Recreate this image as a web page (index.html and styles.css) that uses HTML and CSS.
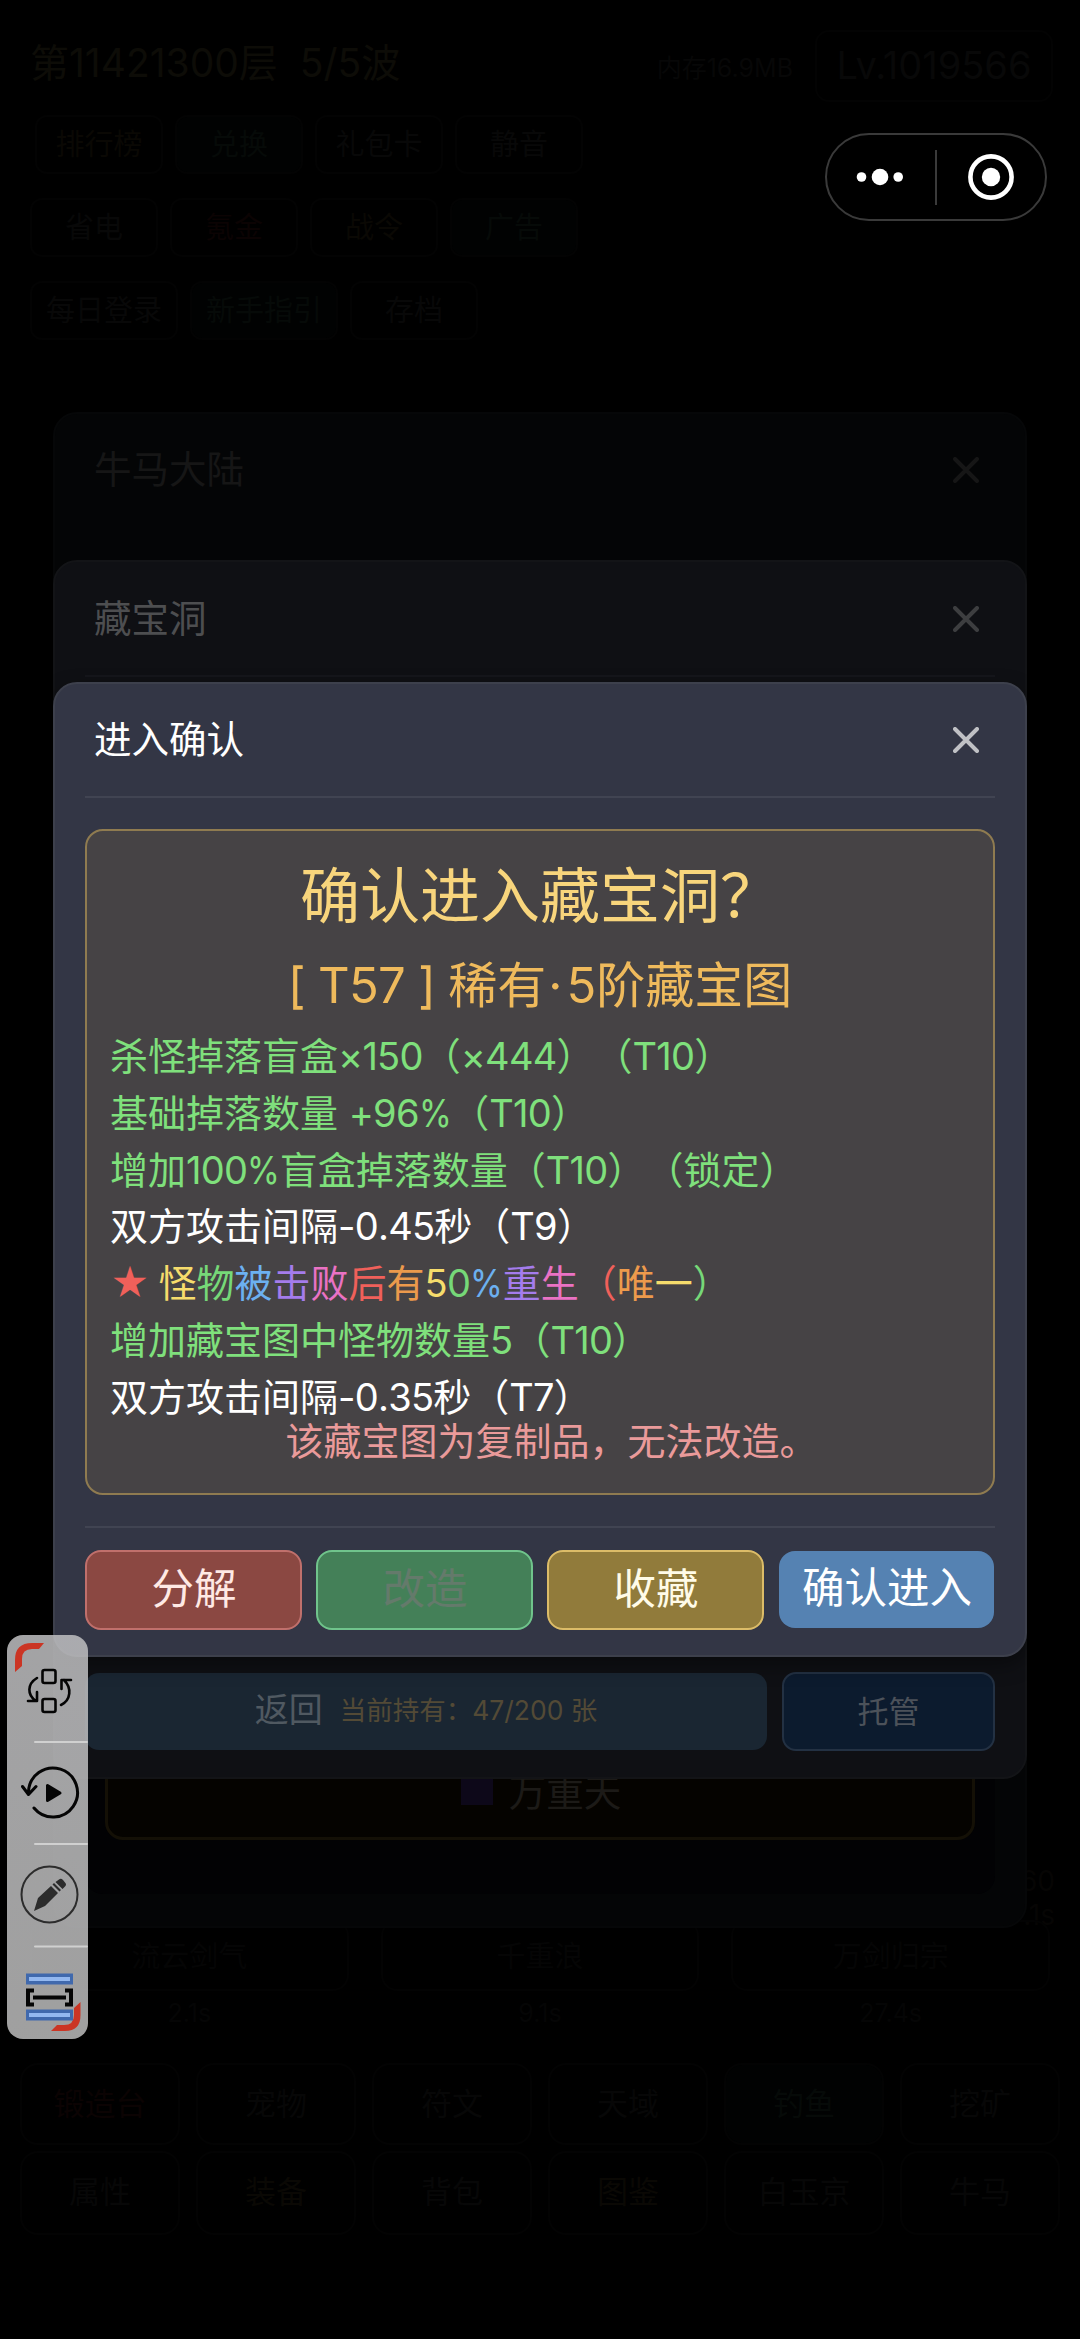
FILE: index.html
```html
<!DOCTYPE html>
<html lang="zh-CN">
<head>
<meta charset="utf-8">
<title>进入确认</title>
<link rel="stylesheet" href="styles.css">
</head>
<body>
<div class="screen">
  <div class="game">
    <header class="topbar">
      <span class="stage">第11421300层&nbsp; 5/5波</span>
      <span class="memory">内存16.9MB</span>
      <span class="level">Lv.1019566</span>
    </header>
    <nav class="chips">
      <div class="chip-row first"><span class="chip gold">排行榜</span><span class="chip green">兑换</span><span class="chip">礼包卡</span><span class="chip">静音</span></div>
      <div class="chip-row second"><span class="chip">省电</span><span class="chip red">氪金</span><span class="chip gold">战令</span><span class="chip green">广告</span></div>
      <div class="chip-row third"><span class="chip wide">每日登录</span><span class="chip wide green">新手指引</span><span class="chip">存档</span></div>
    </nav>
    <div class="counters"><span>60</span><span>.1s</span></div>
    <section class="skills">
      <div class="skill"><b>流云剑气</b><i>2.1s</i></div>
      <div class="skill"><b>千重浪</b><i>9.1s</i></div>
      <div class="skill"><b>万剑归宗</b><i>27.4s</i></div>
    </section>
    <nav class="menu">
      <span class="red">锻造台</span><span>宠物</span><span>符文</span><span>天域</span><span class="green">钓鱼</span><span>挖矿</span>
      <span>属性</span><span class="gold">装备</span><span>背包</span><span class="gold">图鉴</span><span>白玉京</span><span>牛马</span>
    </nav>
  </div>

  <section class="modal modal-land">
    <header class="modal-head"><h2>牛马大陆</h2><svg class="close" viewBox="0 0 26 26"><path d="M2 2 24 24M24 2 2 24"/></svg></header>
    <div class="land-body">
      <div class="land-button"><svg class="gem" viewBox="0 0 36 36"><path d="M2 2h32v32H2z"/></svg>万重天</div>
    </div>
  </section>

  <section class="modal modal-cave">
    <header class="modal-head"><h2>藏宝洞</h2><svg class="close" viewBox="0 0 26 26"><path d="M2 2 24 24M24 2 2 24"/></svg></header>
    <footer class="cave-actions">
      <button class="back">返回<small>当前持有：47/200 张</small></button>
      <button class="host">托管</button>
    </footer>
  </section>

  <section class="modal modal-confirm">
    <header class="modal-head"><h2>进入确认</h2><svg class="close" viewBox="0 0 26 26"><path d="M2 2 24 24M24 2 2 24"/></svg></header>
    <div class="card">
      <h1>确认进入藏宝洞？</h1>
      <h3><span class="tier">[ T57 ] </span>稀有<span class="dot">·</span>5阶藏宝图</h3>
      <ul class="affixes">
        <li class="good">杀怪掉落盲盒<em>×150</em>（<em>×444</em>）（<em>T10</em>）</li>
        <li class="good">基础掉落数量 <em>+96<s>%</s></em>（<em>T10</em>）</li>
        <li class="good">增加<em>100<s>%</s></em>盲盒掉落数量（<em>T10</em>）（锁定）</li>
        <li>双方攻击间隔<em>-0.45</em>秒（<em>T9</em>）</li>
        <li class="rainbow"><span class="c1 star">★</span> <span class="c3">怪</span><span class="c4">物</span><span class="c5">被</span><span class="c6">击</span><span class="c7">败</span><span class="c1">后</span><span class="c2">有</span><em><span class="c3">5</span><span class="c4">0</span><s class="c5">%</s></em><span class="c6">重</span><span class="c7">生</span><span class="c1">（</span><span class="c2">唯</span><span class="c3">一</span><span class="c4">）</span></li>
        <li class="good">增加藏宝图中怪物数量<em>5</em>（<em>T10</em>）</li>
        <li>双方攻击间隔<em>-0.35</em>秒（<em>T7</em>）</li>
      </ul>
      <p class="note">该藏宝图为复制品，无法改造。</p>
    </div>
    <footer class="actions">
      <button class="b-red">分解</button>
      <button class="b-green">改造</button>
      <button class="b-gold">收藏</button>
      <button class="b-blue">确认进入</button>
    </footer>
  </section>

  <div class="capsule">
    <svg class="dots" viewBox="0 0 48 18"><circle cx="5.5" cy="9" r="4.8"/><circle cx="24" cy="9" r="8.3"/><circle cx="42.2" cy="9" r="4.8"/></svg>
    <span class="bar"></span>
    <svg class="target" viewBox="0 0 46 46"><circle class="ring" cx="23" cy="23" r="20.6"/><circle cx="23" cy="23" r="9.2"/></svg>
  </div>

  <aside class="tools">
    <svg viewBox="0 0 82 404">
      <path class="accent" d="M8 37V25Q8 8 25 8H37L32 14H25Q15 14 15 24V31Z"/>
      <path class="accent" d="M73.500 367V380Q73.500 396 58 396H44L50 390H57Q67 390 67 380V373Z"/>
      <g class="swap">
        <rect x="35.500" y="35" width="13" height="13" rx="2"/><rect x="35.500" y="64" width="13" height="13" rx="2"/>
        <path d="M30 43C20 49 20 60 29 66M21 66H30V57M54 70C64 65 65 53 57 45M64 45H54.500V54"/>
      </g>
      <g class="replay">
        <path d="M27 173A24.500 24.500 0 1 0 21.500 157M15.500 151.500 21.500 159.500 29 151.500"/>
        <path class="fill" d="M40.500 150.500V165.500L53 158Z"/>
      </g>
      <g class="edit">
        <circle cx="42.500" cy="259.500" r="28"/>
        <path class="fill" d="M27 276 31 263 44 251 51 258 38 271ZM45.500 249.500 47 248 54 255 52.500 256.500ZM48.500 247 52 244.500Q54 243 56 245L58 247.500Q60 249.500 58 251.500L55.500 254Z"/>
      </g>
      <path class="rule" d="M28 107H80M28 209H80M28 311.500H80"/>
      <g class="scan">
        <path class="outer" d="M19 338.500H66V349.500H19ZM19 374.500H66V385.500H19Z"/>
        <path class="inner" d="M22 344H63M22 380H63"/>
        <path class="bracket" d="M27 355.500H21V369.500H27M58 355.500H64V369.500H58M26 362.500H59"/>
      </g>
    </svg>
  </aside>
</div>
</body>
</html>
```
FILE: styles.css
```css
* { box-sizing: border-box; margin: 0; padding: 0; }

body {
  background: #000;
  font-family: "Inter", "Noto Sans CJK SC", sans-serif;
  font-size: 38px;
  color: #fff;
  text-spacing-trim: space-all;
}

button { font: inherit; border: 0; padding: 0; }
h1, h2, h3, b, i { font-weight: 400; font-style: normal; }

.screen { position: relative; width: 1080px; height: 2339px; overflow: hidden; background: #000; }

/* dimmed game screen */
.game { height: 100%; color: #080808; padding-top: 29px; font-size: 29px; }
.topbar { display: flex; align-items: center; height: 73px; padding: 0 27px 0 30px; }
.stage { font-size: 39px; line-height: 66px; padding-bottom: 6px; color: #0d0c07; flex: 1; white-space: nowrap; }
.memory { font-size: 25px; color: #070707; margin-right: 22px; }
.level { width: 238px; height: 72px; line-height: 66px; text-align: center; font-size: 38px; border: 2px solid #030303; border-radius: 14px; }
.chips { display: flex; flex-direction: column; gap: 24px; padding: 13px 30px 0; height: 240px; }
.chip-row { display: flex; gap: 12px; }
.chip-row.first { padding-left: 5px; }
.chip { width: 128px; height: 59px; border: 2px solid #030303; border-radius: 12px; text-align: center; line-height: 55px; font-size: 29px; }
.chip.wide { width: 148px; }
.game .gold { color: #0a0804; }
.game .red { color: #0b0303; }
.game .green { color: #060a08; background: #010202; }
.counters { display: flex; flex-direction: column; height: 68px; margin-top: 1522px; padding-right: 25px; text-align: right; font-size: 28px; line-height: 34px; color: #060504; }
.skills { display: grid; grid-template-columns: repeat(3, 1fr); gap: 32px; padding: 0 30px; margin-top: -12px; height: 143px; color: #050505; }
.skill { display: flex; flex-direction: column; align-items: center; font-size: 25px; }
.skill b { width: 100%; height: 71px; line-height: 69px; text-align: center; font-size: 29px; border: 2px solid #030303; border-radius: 16px; }
.skill i { line-height: 44px; }
.menu { display: grid; grid-template-columns: repeat(6, 160px); gap: 6px 16px; justify-content: center; color: #070707; }
.menu span { height: 82px; line-height: 78px; text-align: center; font-size: 31px; border: 2px solid #030303; border-radius: 18px; }
.menu span:nth-child(n+7) { height: 84px; }

/* stacked dialogs */
.modal { position: absolute; left: 53px; width: 974px; border-radius: 24px; border: 2px solid; padding: 0 30px; display: flex; flex-direction: column; }
.modal-head { flex: none; height: 114px; display: flex; align-items: center; justify-content: space-between; padding: 0 16px 0 9px; border-bottom: 2px solid; border-color: inherit; }
.modal-head h2 { font-size: 37.500px; line-height: 56px; }
.close { width: 26px; height: 26px; fill: none; stroke: currentColor; stroke-width: 4; stroke-linecap: round; }

.modal-land { top: 412px; height: 1516px; background: #040506; border-color: #060708; color: #161616; }
.modal-land .modal-head { border-color: transparent; }
.land-body { flex: 1; margin: 40px 0 32px; border-radius: 18px; background: #020204; padding: 0 20px 54px; display: flex; flex-direction: column; justify-content: flex-end; }
.land-button { height: 92px; border: 3px solid #141006; border-radius: 18px; background: #050300; display: flex; align-items: center; justify-content: center; gap: 14px; padding-bottom: 10px; font-size: 37.500px; color: #1c1a17; }
.gem { width: 36px; height: 36px; fill: #0d0819; }

.modal-cave { top: 560px; height: 1219px; background: #0f1014; border-color: #131417; color: #4d4e50; }
.modal-cave .modal-head { height: 115px; border-color: #15161b; }
.modal-cave .close { color: #3d3e40; }
.cave-actions { margin: auto 0 26px; display: flex; align-items: center; gap: 15px; }
.back { flex: 1; height: 77px; border-radius: 14px; background: #1a2632; color: #505961; font-size: 34px; line-height: 50px; padding-bottom: 4px; display: flex; align-items: center; justify-content: center; gap: 17px; }
.back small { font-size: 26.500px; color: #534a36; }
.host { width: 213px; height: 79px; border: 2px solid #233143; border-radius: 14px; background: #0c1b2e; color: #4c525a; font-size: 31px; padding-bottom: 4px; }

.modal-confirm { top: 682px; height: 975px; background: #333645; border-color: #3d404c; box-shadow: 0 8px 20px rgba(0, 0, 0, .4); }
.modal-confirm .modal-head { border-color: #414452; }
.modal-confirm .close { color: #c0c1c5; }
.card { margin-top: 31px; height: 666px; border: 2px solid #8f7b50; border-radius: 18px; background: #464345; padding: 20px 23px 0; }
.card h1 { font-size: 60px; line-height: 90px; text-align: center; color: #f8d57c; }
.card h3 { font-size: 49px; line-height: 74px; margin-top: 8px; text-align: center; color: #efba5c; white-space: pre; }
.tier { letter-spacing: -.7px; }
.dot { margin: 0 4px 0 2px; }
.affixes { list-style: none; margin-top: 5px; font-size: 38px; line-height: 56.800px; font-kerning: none; }
.affixes li { height: 56.800px; white-space: pre; }
.affixes em { font-style: normal; letter-spacing: -.75px; }
.affixes s { text-decoration: none; display: inline-block; transform: scaleX(.88); transform-origin: left; margin-right: -4px; }
.star { letter-spacing: -2px; }
.good { color: #7fe07c; }
.note { line-height: 40px; margin-top: -5px; padding-left: 23px; text-align: center; color: #ea9a9a; }
.c1 { color: #f0605a; }
.c2 { color: #ec9a4c; }
.c3 { color: #f6dc6c; }
.c4 { color: #76d878; }
.c5 { color: #6cb0f0; }
.c6 { color: #a47cec; }
.c7 { color: #ea72c4; }

.actions { margin-top: 31px; padding-top: 22px; border-top: 2px solid #414452; display: grid; grid-template-columns: repeat(4, 1fr); gap: 14px; }
.actions button { height: 80px; border: 2px solid; border-radius: 16px; font-size: 42.500px; line-height: 70px; padding: 0 0 3px 1px; color: #fff; }
.actions .b-red { background: #8b4842; border-color: #c0706c; color: #ffe9e4; }
.actions .b-green { background: #448058; border-color: #70c48c; color: #647a6b; }
.actions .b-gold { background: #917b3b; border-color: #dcbc68; color: #fffbe8; }
.actions .b-blue { background: #5582b2; border: 0; height: 77px; margin: 1px 1px 0; }

/* mini-program capsule */
.capsule { position: absolute; left: 825px; top: 133px; width: 222px; height: 88px; border: 2px solid #3a3a3a; border-radius: 44px; background: #000; display: flex; align-items: center; padding-left: 29px; }
.capsule svg { fill: #fff; }
.dots { width: 48px; height: 18px; }
.bar { width: 2px; height: 55px; background: #3a3a3a; margin: 0 31px 0 31px; }
.target { width: 46px; height: 46px; }
.target .ring { fill: none; stroke: #fff; stroke-width: 4.600; }

/* floating recorder tools */
.tools { position: absolute; left: 6.500px; top: 1635px; width: 81.500px; height: 404px; border-radius: 16px; background: linear-gradient(rgba(190, 190, 192, .86), rgba(186, 186, 186, .86)); }
.tools svg { display: block; width: 82px; height: 404px; fill: none; stroke-linejoin: round; stroke-linecap: round; }
.accent { fill: #cb3524; }
.swap { stroke: #050505; stroke-width: 2.600; }
.replay { stroke: #050505; stroke-width: 3; }
.replay .fill { fill: #050505; }
.edit { stroke: #2c2c2c; stroke-width: 2; }
.edit .fill { fill: #2c2c2c; stroke: none; }
.rule { stroke: #d0d0d0; stroke-width: 2; }
.scan { stroke-linecap: butt; stroke-linejoin: miter; }
.outer { fill: #4069ad; }
.inner { stroke: #93b8f0; stroke-width: 4; }
.bracket { stroke: #050505; stroke-width: 4; }
```
